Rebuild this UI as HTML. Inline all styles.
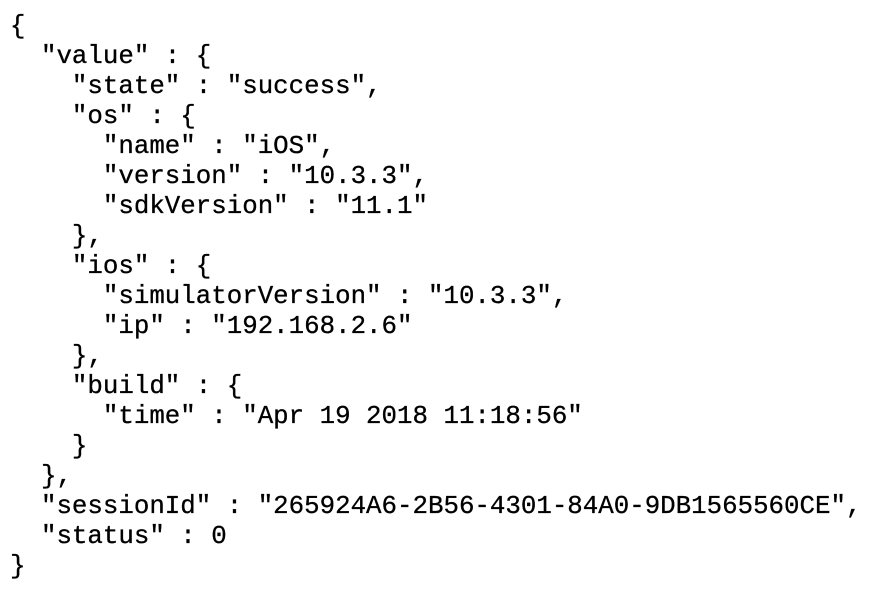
<!DOCTYPE html>
<html><head><meta charset="utf-8"><style>
html,body{margin:0;padding:0;background:#fff;width:884px;height:592px;overflow:hidden}
pre{margin:0;position:absolute;left:10px;top:12px;font-family:"Liberation Mono",monospace;font-size:25.8px;line-height:30px;color:#000;-webkit-text-stroke:0.3px #000}
</style></head><body><pre>{
  "value" : {
    "state" : "success",
    "os" : {
      "name" : "iOS",
      "version" : "10.3.3",
      "sdkVersion" : "11.1"
    },
    "ios" : {
      "simulatorVersion" : "10.3.3",
      "ip" : "192.168.2.6"
    },
    "build" : {
      "time" : "Apr 19 2018 11:18:56"
    }
  },
  "sessionId" : "265924A6-2B56-4301-84A0-9DB1565560CE",
  "status" : 0
}</pre></body></html>
